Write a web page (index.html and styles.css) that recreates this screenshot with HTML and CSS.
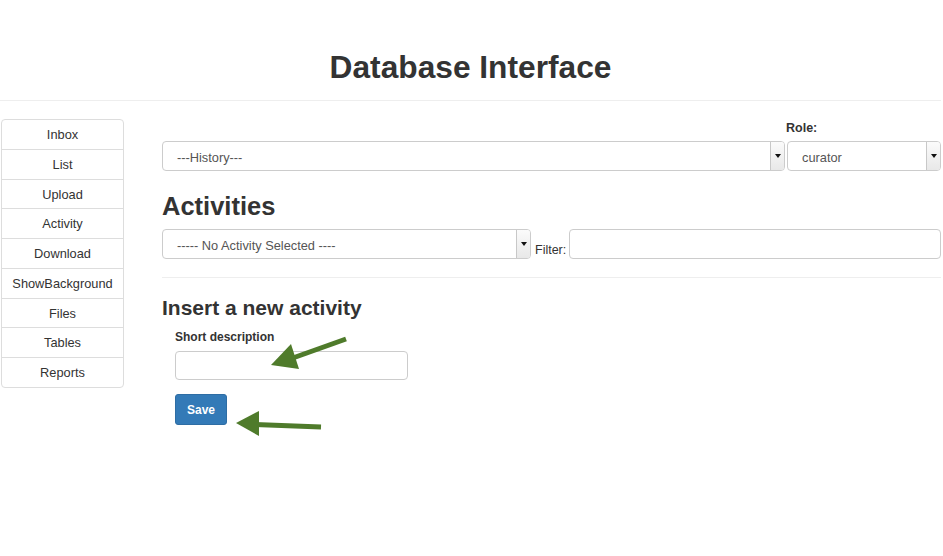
FILE: index.html
```html
<!DOCTYPE html>
<html>
<head>
<meta charset="utf-8">
<title>Database Interface</title>
<link rel="stylesheet" href="styles.css">
</head>
<body>
<header class="top">
  <h1 class="title">Database Interface</h1>
</header>
<div class="layout">
  <nav class="sidebar">
    <a class="nav-item">Inbox</a>
    <a class="nav-item">List</a>
    <a class="nav-item">Upload</a>
    <a class="nav-item">Activity</a>
    <a class="nav-item">Download</a>
    <a class="nav-item">ShowBackground</a>
    <a class="nav-item">Files</a>
    <a class="nav-item">Tables</a>
    <a class="nav-item">Reports</a>
  </nav>
  <main class="main">
    <div class="history-grid">
      <span></span>
      <label class="role-label">Role:</label>
      <div class="select"><span class="select-text">---History---</span><span class="select-btn"><span class="tri"></span></span></div>
      <div class="select"><span class="select-text">curator</span><span class="select-btn"><span class="tri"></span></span></div>
    </div>
    <h2 class="section-title">Activities</h2>
    <div class="activity-row">
      <div class="select activity-select"><span class="select-text">----- No Activity Selected ----</span><span class="select-btn"><span class="tri"></span></span></div>
      <label class="filter-label">Filter:</label>
      <div class="input filter-input"></div>
    </div>
    <hr class="divider">
    <h3 class="sub-title">Insert a new activity</h3>
    <form class="insert-form">
      <label class="field-label">Short description</label>
      <div class="input desc-input"></div>
      <button class="btn-save" type="button">Save</button>
    </form>
  </main>
</div>
<svg class="annotations" width="943" height="556" viewBox="0 0 943 556">
  <line x1="346" y1="339" x2="290" y2="359" stroke="#4f7b2b" stroke-width="5" stroke-linecap="butt"/>
  <polygon points="271,365 291,344 299,369" fill="#4f7b2b"/>
  <line x1="321" y1="427" x2="255" y2="424.5" stroke="#4f7b2b" stroke-width="5"/>
  <polygon points="236,423 259,411 259,436" fill="#4f7b2b"/>
</svg>
</body>
</html>
```
FILE: styles.css
```css
html, body {
  margin: 0;
  padding: 0;
  background: #fff;
}
body {
  font-family: "Liberation Sans", Arial, Helvetica, sans-serif;
  color: #333;
  font-size: 12px;
  width: 943px;
  height: 556px;
  overflow: hidden;
  position: relative;
}
.top {
  padding-top: 51px;
  padding-bottom: 16px;
  border-bottom: 1px solid #eee;
  margin-right: 2px;
  text-align: center;
}
.title {
  margin: 0;
  font-size: 31.7px;
  line-height: 33px;
  font-weight: bold;
  color: #333;
}
.layout {
  display: flex;
  align-items: flex-start;
  padding-top: 18px;
}
.sidebar {
  margin-left: 1px;
  width: 121px;
  border: 1px solid #ddd;
  border-radius: 4px;
  display: flex;
  flex-direction: column;
}
.nav-item {
  height: 28.75px;
  line-height: 28.75px;
  padding-top: 1px;
  margin-bottom: -1px;
  text-align: center;
  font-size: 12.8px;
  color: #333;
  border-top: 1px solid #ddd;
}
.nav-item:first-child {
  border-top: none;
}
.main {
  flex: 1;
  margin-left: 38px;
  margin-right: 2px;
}
.history-grid {
  display: grid;
  grid-template-columns: 1fr 154px;
  column-gap: 2px;
}
.role-label {
  font-weight: bold;
  font-size: 12.5px;
  line-height: 18px;
  margin-bottom: 4px;
  margin-left: -1px;
}
.select {
  height: 28px;
  border: 1px solid #ccc;
  border-radius: 4px;
  display: flex;
  align-items: center;
  background: #fff;
  overflow: hidden;
}
.select-text {
  flex: 1;
  padding-left: 14px;
  padding-top: 2px;
  font-size: 12.8px;
  color: #555;
}
.select-btn {
  width: 13px;
  align-self: stretch;
  border-left: 1px solid #c8c8c8;
  background: linear-gradient(#fbfbfb, #e8e8e8);
  display: flex;
  align-items: center;
  justify-content: center;
}
.tri {
  width: 0;
  height: 0;
  border-left: 3px solid transparent;
  border-right: 3px solid transparent;
  border-top: 4px solid #111;
}
.section-title {
  margin: 21px 0 9px;
  font-size: 25.5px;
  line-height: 28px;
  font-weight: bold;
  color: #333;
}
.activity-row {
  display: flex;
  align-items: flex-end;
}
.activity-select {
  width: 367px;
}
.filter-label {
  font-size: 12.5px;
  margin-left: 4px;
  margin-right: 3px;
  padding-bottom: 2px;
  line-height: 14px;
}
.input {
  height: 28px;
  border: 1px solid #ccc;
  border-radius: 4px;
  background: #fff;
}
.filter-input {
  flex: 1;
}
.divider {
  margin: 18px 0 0;
  border: none;
  border-top: 1px solid #eee;
}
.sub-title {
  margin: 18px 0 10px;
  font-size: 21px;
  line-height: 23px;
  font-weight: bold;
  color: #333;
}
.insert-form {
  padding-left: 13px;
  display: flex;
  flex-direction: column;
  align-items: flex-start;
}
.field-label {
  font-weight: bold;
  font-size: 12px;
  line-height: 17px;
  margin-bottom: 5px;
}
.desc-input {
  width: 231px;
  height: 27px;
}
.btn-save {
  margin-top: 14px;
  width: 52px;
  height: 31px;
  background: #337ab7;
  border: 1px solid #2e6da4;
  border-radius: 3px;
  color: #fff;
  font-family: "Liberation Sans", Arial, sans-serif;
  font-weight: bold;
  font-size: 12px;
  padding: 0;
}
.annotations {
  position: absolute;
  left: 0;
  top: 0;
  pointer-events: none;
}
```
